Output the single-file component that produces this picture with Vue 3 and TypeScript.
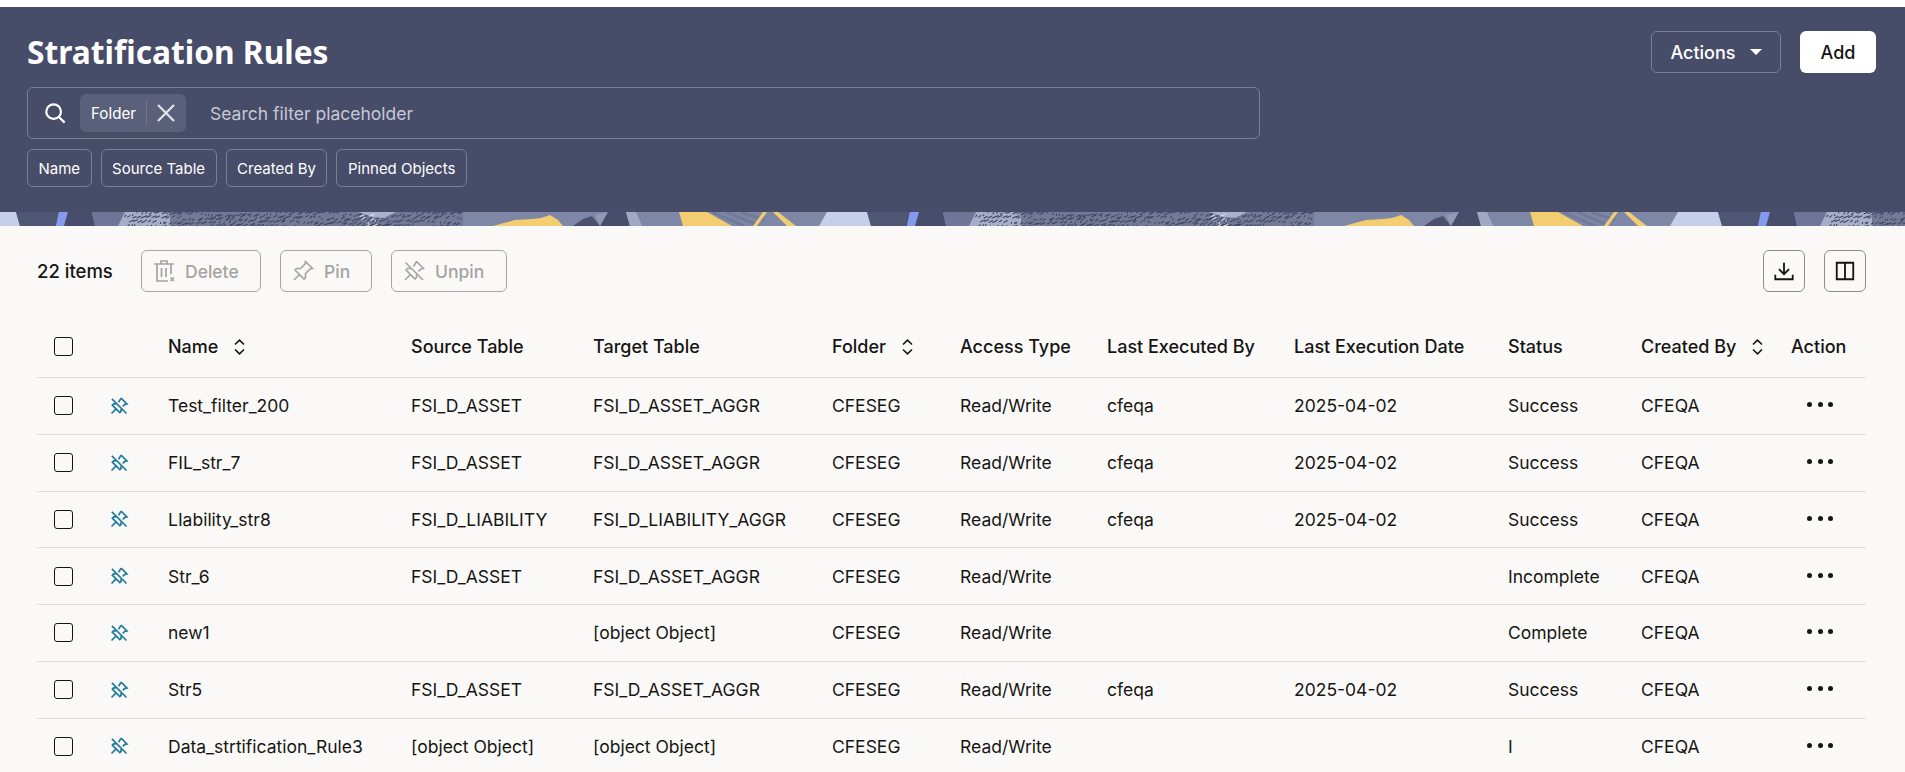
<template>
  <div class="page">
    <!-- HEADER -->
    <header class="hero">
      <div class="hero-top">
        <h1 class="title">Stratification Rules</h1>
        <div class="hero-actions">
          <button class="btn-actions" type="button">
            Actions
            <span class="caret"></span>
          </button>
          <button class="btn-add" type="button">Add</button>
        </div>
      </div>

      <div class="search-box">
        <svg class="search-icon" viewBox="0 0 24 24" fill="none" stroke="currentColor" stroke-width="2.4">
          <circle cx="10.5" cy="10.5" r="8" />
          <path d="M16 16 22.5 22.5" />
        </svg>
        <div class="folder-chip">
          <span>Folder</span>
          <i class="chip-sep"></i>
          <svg class="chip-x" viewBox="0 0 18 18" fill="none" stroke="currentColor" stroke-width="2.2">
            <path d="M1 1 17 17M17 1 1 17" />
          </svg>
        </div>
        <span class="placeholder">Search filter placeholder</span>
      </div>

      <div class="filters">
        <button v-for="f in filters" :key="f" class="filter" type="button">{{ f }}</button>
      </div>
    </header>

    <!-- DECORATIVE STRIP -->
    <svg class="band" height="14" aria-hidden="true">
      <defs>
        <pattern id="bandTile" width="851" height="14" patternUnits="userSpaceOnUse">
          <rect width="851" height="14" fill="#7f87a6" />
          <polygon points="0,0 16,0 20,14 0,14" fill="#c6cfea" />
          <polygon points="827,0 851,0 851,14 819,14" fill="#c6cfea" />
          <polygon points="16,0 59,0 56,14 20,14" fill="#4f5674" />
          <polygon points="59,0 68,0 64,14 56,14" fill="#8499f0" />
          <polygon points="68,0 92,0 95,14 64,14" fill="#474d6b" />
          <polygon points="92,0 125,0 118,14 95,14" fill="#6e7596" />
          <polygon points="125,0 170,0 170,14 118,14" fill="#a6adc9" />
          <rect x="170" width="293" height="14" fill="#737a98" />
          <path :d="darkDashes" stroke="#3f4562" stroke-width="1.1" fill="none" />
          <path d="M358 0H396L384 6 372 5Z" fill="#aab1cb" />
          <path :d="lightDashes" stroke="#e6e9f3" stroke-width="1" fill="none" />
          <path d="M493 14 515 8 532 7 541 6 550 3 558 8 563 14Z" fill="#f3cd70" />
          <path d="M573 14 583 7 592 4 600 14Z" fill="#4a506e" />
          <polygon points="595,3 608,0 602,14 600,14" fill="#9299b5" />
          <polygon points="608,0 626,0 630,14 600,14" fill="#474d6b" />
          <polygon points="626,0 636,0 642,14 630,14" fill="#a1a8c3" />
          <polygon points="679,0 707,0 732,14 683,14" fill="#f3cd70" />
          <path d="M712 0 744 14M726 0 755 12M740 0 764 8" stroke="#727a99" stroke-width="3" fill="none" />
          <polygon points="763,0 767,0 757,14 753,14" fill="#f3cd70" />
          <polygon points="773,0 778,0 796,14 787,14" fill="#f3cd70" />
        </pattern>
      </defs>
      <rect width="100%" height="14" fill="url(#bandTile)" />
    </svg>

    <!-- TOOLBAR -->
    <div class="content">
      <div class="toolbar">
        <span class="count">22 items</span>
        <button class="btn-off btn-delete" type="button">
          <svg class="btn-icon" viewBox="0 0 24 24" fill="none" stroke="currentColor" stroke-width="1.7">
            <path d="M2 5H22M9 5V2H15V5M5 5V22H16M19 5V15M9.5 9V18M14 9V18" />
            <path d="M18.5 18.5 22 22M22 18.5 18.5 22" />
          </svg>
          Delete
        </button>
        <button class="btn-off btn-pin" type="button">
          <svg class="btn-icon" viewBox="0 0 24 24" fill="none" stroke="currentColor" stroke-width="1.6">
            <path :d="pinPath" />
          </svg>
          Pin
        </button>
        <button class="btn-off btn-unpin" type="button">
          <svg class="btn-icon" viewBox="0 0 24 24" fill="none" stroke="currentColor" stroke-width="1.6">
            <path :d="unpinPath" />
          </svg>
          Unpin
        </button>
        <div class="toolbar-right">
          <button class="btn-square" type="button">
            <svg viewBox="0 0 24 24" fill="none" stroke="currentColor" stroke-width="2">
              <path d="M12 3V15M6.5 10 12 15.5 17.5 10M2.5 16V21H21.5V16" />
            </svg>
          </button>
          <button class="btn-square" type="button">
            <svg viewBox="0 0 24 24" fill="none" stroke="currentColor" stroke-width="2">
              <path d="M3 3H21V21H3ZM12 3V21" />
            </svg>
          </button>
        </div>
      </div>

      <!-- TABLE -->
      <div class="row head">
        <div class="cell-check"><span class="checkbox"></span></div>
        <div></div>
        <div v-for="col in columns" :key="col.label" class="head-cell">
          {{ col.label }}
          <svg v-if="col.sort" class="sort" viewBox="0 0 12 16" fill="none" stroke="currentColor" stroke-width="1.6">
            <path d="M1.5 5.5 6 1.2 10.5 5.5M1.5 10.5 6 14.8 10.5 10.5" />
          </svg>
        </div>
      </div>

      <div v-for="r in rows" :key="r.name" class="row">
        <div class="cell-check"><span class="checkbox"></span></div>
        <div class="cell-pin">
          <svg viewBox="0 0 24 24" fill="none" stroke="currentColor" stroke-width="2">
            <path :d="unpinPath" />
          </svg>
        </div>
        <div>{{ r.name }}</div>
        <div>{{ r.source }}</div>
        <div>{{ r.target }}</div>
        <div>CFESEG</div>
        <div>Read/Write</div>
        <div>{{ r.by }}</div>
        <div>{{ r.date }}</div>
        <div>{{ r.status }}</div>
        <div>CFEQA</div>
        <div class="cell-dots"><i></i><i></i><i></i></div>
      </div>
    </div>
  </div>
</template>

<script setup lang="ts">
interface Rule {
  name: string
  source: string
  target: string
  by: string
  date: string
  status: string
}

const filters = ['Name', 'Source Table', 'Created By', 'Pinned Objects']

const columns = [
  { label: 'Name', sort: true },
  { label: 'Source Table', sort: false },
  { label: 'Target Table', sort: false },
  { label: 'Folder', sort: true },
  { label: 'Access Type', sort: false },
  { label: 'Last Executed By', sort: false },
  { label: 'Last Execution Date', sort: false },
  { label: 'Status', sort: false },
  { label: 'Created By', sort: true },
  { label: 'Action', sort: false },
]

const asset = 'FSI_D_ASSET'
const assetAggr = 'FSI_D_ASSET_AGGR'
const obj = '[object Object]'

const rows: Rule[] = [
  { name: 'Test_filter_200', source: asset, target: assetAggr, by: 'cfeqa', date: '2025-04-02', status: 'Success' },
  { name: 'FIL_str_7', source: asset, target: assetAggr, by: 'cfeqa', date: '2025-04-02', status: 'Success' },
  { name: 'LIability_str8', source: 'FSI_D_LIABILITY', target: 'FSI_D_LIABILITY_AGGR', by: 'cfeqa', date: '2025-04-02', status: 'Success' },
  { name: 'Str_6', source: asset, target: assetAggr, by: '', date: '', status: 'Incomplete' },
  { name: 'new1', source: '', target: obj, by: '', date: '', status: 'Complete' },
  { name: 'Str5', source: asset, target: assetAggr, by: 'cfeqa', date: '2025-04-02', status: 'Success' },
  { name: 'Data_strtification_Rule3', source: obj, target: obj, by: '', date: '', status: 'I' },
]

const pinPath = 'M14.5 2.5 21.5 9.5 19 10 14.5 14.5 14.5 18.5 13 20 4 11 5.5 9.5 9.5 9.5 14 5ZM8.5 15.5 3 21'
const unpinPath =
  'M14.5 2.5 21.5 9.5 19 10 16.5 12.5M14.5 15.5V18.5L13 20 4 11 5.5 9.5H8.5M11.5 7.5 14.5 2.5M8.5 15.5 3 21M3.5 3.5 21 21'

// short strokes for the textured part of the strip
function makeDashes(from: number, to: number, step: number): string {
  let seed = 7
  const next = () => {
    seed = (seed * 16807) % 2147483647
    return seed / 2147483647
  }
  let d = ''
  for (let x = from; x < to; x += step) {
    for (let y = 1; y < 14; y += 4) {
      const px = x + next() * step
      const py = y + next() * 2
      const wave = Math.sin(x / 22 + y / 4)
      const dx = 5 * wave
      const dy = wave > 0 ? -2 : 2
      d += `M${px.toFixed(1)} ${py.toFixed(1)}l${dx.toFixed(1)} ${dy}`
    }
  }
  return d
}

const darkDashes = makeDashes(126, 462, 4)
const lightDashes = makeDashes(364, 392, 6).slice(0, 140)
</script>

<style scoped>
.page {
  height: 100vh;
  box-sizing: border-box;
  padding-top: 7px;
  overflow: hidden;
  font-family: "Inter", "Noto Sans", sans-serif;
  font-size: 17.5px;
  color: #161513;
  background: #fff;
}

button {
  font-family: inherit;
  cursor: pointer;
}

/* HEADER */
.hero {
  padding: 24px 29px 25px 27px;
  color: #fff;
  background: #474c69;
}

.hero-top {
  display: flex;
  justify-content: space-between;
  align-items: center;
  height: 42px;
}

.title {
  margin: -2px 0 0;
  font-family: "Noto Sans", sans-serif;
  font-size: 31.7px;
  font-weight: 700;
}

.hero-actions {
  display: flex;
  gap: 19px;
}

.btn-actions,
.btn-add {
  height: 42px;
  border-radius: 6px;
  font-size: 18px;
  font-weight: 500;
}

.btn-actions {
  display: flex;
  align-items: center;
  justify-content: center;
  gap: 14px;
  width: 130px;
  padding: 0;
  color: #fff;
  background: transparent;
  border: 1px solid #7b7f96;
}

.caret {
  width: 0;
  height: 0;
  border-left: 6px solid transparent;
  border-right: 6px solid transparent;
  border-top: 6px solid #fff;
}

.btn-add {
  width: 76px;
  padding: 0;
  color: #161513;
  background: #fff;
  border: none;
}

/* SEARCH */
.search-box {
  display: flex;
  align-items: center;
  box-sizing: border-box;
  width: 1233px;
  height: 52px;
  margin-top: 14px;
  padding-left: 16px;
  border: 1px solid #7b7f96;
  border-radius: 6px;
}

.search-icon {
  width: 22px;
  height: 22px;
  margin-right: 14px;
}

.folder-chip {
  display: flex;
  align-items: center;
  box-sizing: border-box;
  width: 106px;
  height: 38px;
  padding-left: 11px;
  font-size: 15.2px;
  background: #5a5f7a;
  border-radius: 6px;
}

.chip-sep {
  width: 1px;
  height: 26px;
  margin: 0 10px;
  background: #70748c;
}

.chip-x {
  width: 18px;
  height: 18px;
  color: #e4e5ea;
}

.placeholder {
  margin-left: 24px;
  font-size: 17.5px;
  color: #c6c8d4;
}

.filters {
  display: flex;
  gap: 9px;
  margin-top: 10px;
}

.filter {
  height: 38px;
  padding: 0 10.5px;
  font-size: 15px;
  color: #fff;
  background: transparent;
  border: 1px solid #7b7f96;
  border-radius: 6px;
}

/* STRIP */
.band {
  display: block;
  width: 100%;
}

/* CONTENT */
.content {
  height: 100%;
  padding: 24px 39px 0 37px;
  background: #faf9f7;
}

.toolbar {
  display: flex;
  align-items: center;
  height: 42px;
  margin-bottom: 33px;
}

.count {
  width: 104px;
  font-size: 18.5px;
  font-weight: 500;
}

.btn-off {
  display: flex;
  align-items: center;
  gap: 9px;
  box-sizing: border-box;
  height: 42px;
  padding: 0 0 0 10px;
  font-size: 17.5px;
  font-weight: 500;
  color: #a5a39f;
  background: transparent;
  border: 1px solid #a8a6a2;
  border-radius: 6px;
}

.btn-delete {
  width: 120px;
  margin-right: 19px;
}

.btn-pin {
  width: 92px;
  margin-right: 19px;
}

.btn-unpin {
  width: 116px;
}

.btn-icon {
  width: 24px;
  height: 24px;
}

.toolbar-right {
  display: flex;
  gap: 19px;
  margin-left: auto;
}

.btn-square {
  display: flex;
  align-items: center;
  justify-content: center;
  box-sizing: border-box;
  width: 42px;
  height: 42px;
  padding: 0;
  color: #161513;
  background: transparent;
  border: 1px solid #8f8d89;
  border-radius: 6px;
}

.btn-square svg {
  width: 22px;
  height: 22px;
}

/* TABLE */
.row {
  display: grid;
  grid-template-columns: 61px 70px 243px 182px 239px 128px 147px 187px 214px 133px 150px 75px;
  align-items: center;
  box-sizing: border-box;
  height: 56.75px;
  border-bottom: 1px solid #dfdedb;
  white-space: nowrap;
}

.row.head {
  height: 53px;
  padding-bottom: 9px;
  font-size: 18px;
  font-weight: 500;
}

.head-cell {
  display: flex;
  align-items: center;
  gap: 15px;
}

.sort {
  width: 13px;
  height: 16px;
}

.cell-check {
  padding-left: 17px;
}

.checkbox {
  display: block;
  box-sizing: border-box;
  width: 19px;
  height: 19px;
  border: 1.5px solid #161513;
  border-radius: 3px;
}

.cell-pin {
  display: flex;
  padding-left: 11px;
  color: #1f7a9c;
}

.cell-pin svg {
  width: 20px;
  height: 20px;
}

.cell-dots {
  display: flex;
  gap: 5.5px;
  margin-top: -2px;
  padding-left: 16px;
}

.cell-dots i {
  width: 5px;
  height: 5px;
  border-radius: 50%;
  background: #161513;
}
</style>

<style>
html,
body {
  overflow: hidden;
}
</style>
